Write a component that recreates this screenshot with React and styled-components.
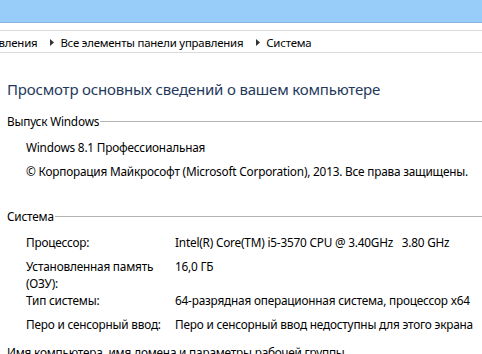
import { Fragment } from "react"
import styled, { createGlobalStyle } from "styled-components"

const Global = createGlobalStyle`
    html, body {
        margin: 0;
        padding: 0;
        background: #fff;
        overflow: hidden;
    }
    body {
        font-family: "Noto Sans", "Open Sans", sans-serif;
        font-size: 11.8px;
        letter-spacing: -0.2px;
        color: #000;
    }
`

const Window = styled.div`
    width: 482px;
    height: 354px;
    overflow: hidden;
    background: #fff;
`

const TitleBar = styled.div`
    height: 22px;
    background: #99cdf9;
    border-bottom: 1px solid #86b4dc;
`

const AddressBar = styled.div`
    margin-top: 7px;
    height: 21px;
    border-top: 1px solid #dadada;
    border-bottom: 1px solid #dadada;
    overflow: hidden;
    display: flex;
    align-items: center;
`

const Crumbs = styled.div`
    display: flex;
    align-items: center;
    white-space: nowrap;
    font-size: 11.4px;
    margin-left: -69px;
    padding-top: 1px;
`

const Crumb = styled.span`
    color: #000;
`

const Arrow = styled.svg`
    width: 4px;
    height: 7px;
    margin: 0 6px 0 13px;
    fill: #333;
`

const Content = styled.div`
    padding: 26px 0 0 7px;
`

const Heading = styled.h1`
    margin: 0 0 13px;
    font-size: 15px;
    letter-spacing: -0.18px;
    font-weight: normal;
    color: #1e395b;
    white-space: nowrap;
`

const Section = styled.section`
    margin-bottom: ${p => p.$gap || 0}px;
`

const SectionHead = styled.div`
    display: flex;
    align-items: center;
    height: 18px;
    margin-bottom: 9px;

    &::after {
        content: "";
        flex: 1;
        height: 1px;
        background: #b4b4b4;
        margin-left: 1px;
    }
`

const Line = styled.div`
    line-height: 17px;
    padding-left: 19px;
    margin-bottom: 7px;
    white-space: nowrap;
`

const Grid = styled.div`
    display: grid;
    grid-template-columns: 149px 1fr;
    grid-auto-rows: minmax(24px, auto);
    padding-left: 19px;
    line-height: 17px;
    white-space: nowrap;
`

const Label = styled.div``

const Value = styled.div`
    white-space: pre;
`

const Footer = styled.div`
    margin-top: 4px;
    line-height: 17px;
    white-space: nowrap;
`

const rows = [
    ["Процессор:", "Intel(R) Core(TM) i5-3570 CPU @ 3.40GHz   3.80 GHz"],
    [<>Установленная память<br />(ОЗУ):</>, "16,0 ГБ"],
    ["Тип системы:", "64-разрядная операционная система, процессор x64"],
    ["Перо и сенсорный ввод:", "Перо и сенсорный ввод недоступны для этого экрана"],
]

function ArrowIcon() {
    return (
        <Arrow viewBox="0 0 4 7">
            <path d="M0 0 L4 3.5 L0 7 Z" />
        </Arrow>
    )
}

export default function App() {
    return (
        <Window>
            <Global />
            <TitleBar />
            <AddressBar>
                <Crumbs>
                    <Crumb>Панель управления</Crumb>
                    <ArrowIcon />
                    <Crumb>Все элементы панели управления</Crumb>
                    <ArrowIcon />
                    <Crumb>Система</Crumb>
                </Crumbs>
            </AddressBar>
            <Content>
                <Heading>Просмотр основных сведений о вашем компьютере</Heading>
                <Section $gap={27}>
                    <SectionHead>Выпуск Windows</SectionHead>
                    <Line>Windows 8.1 Профессиональная</Line>
                    <Line>© Корпорация Майкрософт (Microsoft Corporation), 2013. Все права защищены.</Line>
                </Section>
                <Section>
                    <SectionHead>Система</SectionHead>
                    <Grid>
                        {rows.map((r, i) => (
                            <Fragment key={i}>
                                <Label>{r[0]}</Label>
                                <Value>{r[1]}</Value>
                            </Fragment>
                        ))}
                    </Grid>
                </Section>
                <Footer>Имя компьютера, имя домена и параметры рабочей группы</Footer>
            </Content>
        </Window>
    )
}
